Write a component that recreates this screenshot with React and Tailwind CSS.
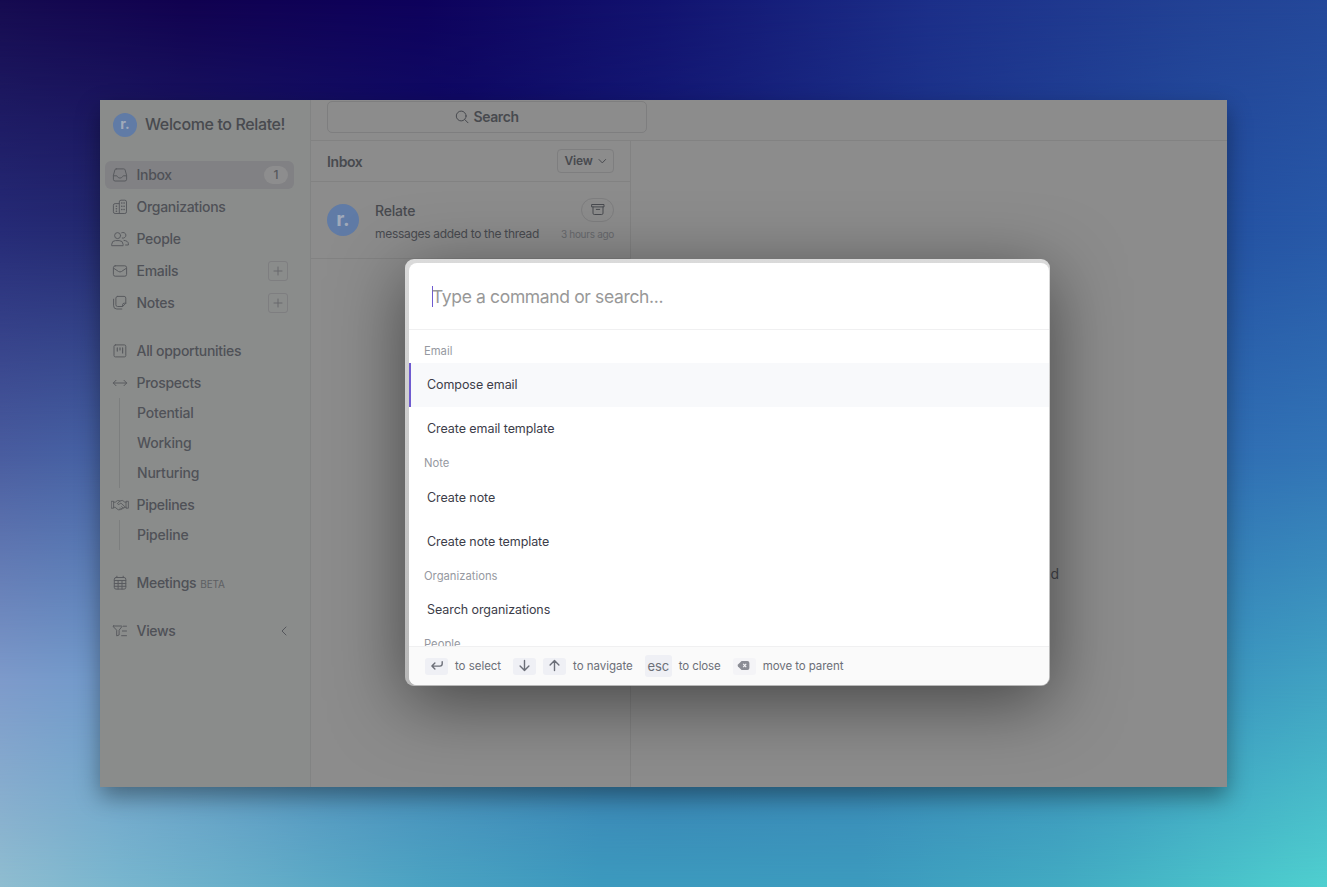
import React from "react";

const S = ({ children, className = "w-4 h-4", box = "0 0 16 16", sw = 1 }) => (
  <svg className={`${className} shrink-0`} viewBox={box} fill="none" stroke="currentColor" strokeWidth={sw} strokeLinecap="round" strokeLinejoin="round">{children}</svg>
);

const InboxIcon = () => (
  <S><path d="M4.2 1.9h7.6q1 0 1.3 1l1.5 5.4v4q0 1.7-1.7 1.7H3.1q-1.7 0-1.7-1.7v-4l1.5-5.4q.3-1 1.3-1z" /><path d="M1.4 8.8h3.2q.5 0 .8.7.7 1.6 2.6 1.6t2.6-1.6q.3-.7.8-.7h3.2" /></S>
);
const OrgIcon = () => (
  <S><path d="M6.5 14.5h6.3q1.7 0 1.7-1.7V2.9q0-1.7-1.7-1.7H9q-1.7 0-1.7 1.7v11.6H3.1q-1.7 0-1.7-1.7V6.3q0-1.7 1.7-1.7h4" /><path strokeWidth="1.5" d="M9.7 4h.2M12 4h.2M9.7 7.3h.2M12 7.3h.2M9.7 10.6h.2M12 10.6h.2M4.3 7.3h.2M4.3 9.8h.2M4.3 12.2h.2" /></S>
);
const PeopleIcon = () => (
  <S className="w-[18px] h-4" box="0 0 18 16"><circle cx="6.6" cy="4.6" r="3" /><path d="M.7 14.3v-1Q.9 9.6 4.4 9.6h3.8q3.7 0 3.9 3.7v1zM10.7 1.7a2.9 2.9 0 1 1 .6 5.4M13 9.4q4.2.3 4.4 3.4v1.2h-2.8" /></S>
);
const MailIcon = () => (
  <S><rect x="1.4" y="2.8" width="13.2" height="10.4" rx="1.8" /><path d="M1.6 5.2l4.9 3.3q1.5.9 3 0l4.9-3.3" /></S>
);
const NotesIcon = () => (
  <S><path d="M5.6 1.4h6.5q1.7 0 1.7 1.7v5.2l-3.2 3.2h-5q-1.7 0-1.7-1.7V3.1q0-1.7 1.7-1.7zM13.8 8.2h-1.6q-1.6 0-1.6 1.6v1.6M1.6 4.2v6.6q0 3.2 3.2 3.2h5" /></S>
);
const BoardIcon = () => (
  <S><rect x="2" y="1.9" width="11.8" height="12" rx="1.4" /><path strokeWidth="1.2" d="M5.3 4.9v3.2M8 4.9v2M10.6 4.9v5" /></S>
);
const ArrowsIcon = () => (
  <S><path d="M1.3 8h13.4M4 5.3L1.3 8 4 10.7M12 5.3L14.7 8 12 10.7" /></S>
);
const HandshakeIcon = () => (
  <S className="w-[18px] h-4" box="0 0 18 16" sw={0.9}><path d="M.6 4.3h2v6.9h-2zM15.4 4.3h2v6.9h-2zM2.8 5.2h1.5l2.1-1.6h1.7l1 .6M2.8 10.3h1.3l3 2.4q1 .6 1.8-.1M15.2 5.2h-1.4l-2-1.6H9.7L6.7 6q-.6.9.3 1.4.9.3 1.7-.5l1.2-.8 3.7 3.3q.5.8-.3 1.4-.6.3-1.2-.1M15.2 10.3h-1.5M12.1 10.8q0 1.5-1.6 1.2M10.5 12q-.6 1.2-2 .3M10.7 9.7l1.5 1.3M9.4 10.9l1.1 1.1" /></S>
);
const CalendarIcon = () => (
  <S><rect x="2.3" y="2.5" width="11.5" height="11.6" rx="1.7" /><path d="M4.9 1.2v1.3M11.2 1.2v1.3M2.3 5.5h11.5M2.3 8.5h11.5M2.3 11.3h11.5M6.1 5.5v8.6M10 5.5v8.6" /></S>
);
const FilterIcon = () => (
  <S><path d="M1.4 3h8.4q.3.4-.1.9L7.1 7.2V12l-2.4.9V7.2L1.5 3.9Q1 3.3 1.4 3zM11.3 3.2h3.2M10.4 8h4.1M9.6 12.7h4.9" /></S>
);
const Plus = () => (
  <span className="w-5 h-5 rounded-[3px] border border-[#7e7e80] flex items-center justify-center text-[#68696c]">
    <S className="w-3 h-3" box="0 0 12 12"><path d="M6 2v8M2 6h8" /></S>
  </span>
);

const Item = ({ icon, label, active, children }) => (
  <div className={`h-7 ml-[5px] mr-4 pl-[5px] pr-1.5 flex items-center rounded-md ${active ? "bg-[#818184]" : ""}`}>
    <span className="w-5 flex justify-center text-[#595b5f]">{icon}</span>
    <span className="ml-[6.5px] text-[14px] leading-5 font-medium tracking-[-0.3px] text-[#4f5157]">{label}</span>
    {children}
  </div>
);
const Sub = ({ items }) => (
  <div className="ml-[19px] border-l border-[#7c7e7e] pl-[17px] text-[14px] font-medium tracking-[-0.2px] text-[#505258]">
    {items.map((t) => <div key={t} className="h-[30px] leading-[30px]">{t}</div>)}
  </div>
);

const Sidebar = () => (
  <aside className="w-[211px] shrink-0 border-r border-[#828383] bg-[#8a8c8b] flex flex-col">
    <div className="flex items-center h-12 pl-[13px] pt-px">
      <span className="w-6 h-6 rounded-full bg-[#607ba6] text-[#a0aaba] text-[14px] font-bold leading-none pb-[2px] flex items-center justify-center">r.</span>
      <span className="ml-2 pb-0.5 text-[16px] font-medium text-[#484a4f] tracking-[-0.38px]">Welcome to Relate!</span>
    </div>
    <nav className="mt-[13px] flex flex-col">
      <div className="flex flex-col gap-1">
        <Item icon={<InboxIcon />} label="Inbox" active>
          <span className="ml-auto w-6 h-[18px] rounded-full bg-[#8d8d8e] flex items-center justify-center text-[12px] font-medium text-[#55575c]">1</span>
        </Item>
        <Item icon={<OrgIcon />} label="Organizations" />
        <Item icon={<PeopleIcon />} label="People" />
        <Item icon={<MailIcon />} label="Emails"><span className="ml-auto"><Plus /></span></Item>
        <Item icon={<NotesIcon />} label="Notes"><span className="ml-auto"><Plus /></span></Item>
      </div>
      <div className="mt-5 flex flex-col gap-1">
        <Item icon={<BoardIcon />} label="All opportunities" />
        <Item icon={<ArrowsIcon />} label="Prospects" />
      </div>
      <div className="mt-px"><Sub items={["Potential", "Working", "Nurturing"]} /></div>
      <div className="mt-[3px]"><Item icon={<HandshakeIcon />} label="Pipelines" /></div>
      <div className="mt-px"><Sub items={["Pipeline"]} /></div>
      <div className="mt-[19px]">
        <Item icon={<CalendarIcon />} label="Meetings"><span className="ml-1 mt-0.5 text-[10px] tracking-[-0.1px] text-[#5d5f63]">BETA</span></Item>
      </div>
      <div className="mt-5">
        <Item icon={<FilterIcon />} label="Views">
          <span className="ml-auto text-[#55575c]"><S className="w-2 h-3" box="0 0 8 12"><path d="M6 2L2 6l4 4" /></S></span>
        </Item>
      </div>
    </nav>
  </aside>
);

const Thread = () => (
  <section className="w-80 shrink-0 border-r border-[#828282] text-[#484a4f]">
    <div className="h-[41px] px-4 flex items-center justify-between border-b border-[#828282]">
      <h2 className="text-[14px] font-semibold tracking-[-0.4px]">Inbox</h2>
      <button className="w-[57px] h-6 border border-[#7e7e7f] rounded flex items-center justify-center gap-1 text-[12px] font-semibold tracking-[-0.2px]">
        View<S className="w-2.5 h-2.5" box="0 0 10 10"><path d="M2 3.5L5.3 6.9 8.6 3.5" /></S>
      </button>
    </div>
    <div className="h-[77px] px-4 flex border-b border-[#828282]">
      <span className="mt-[22px] w-8 h-8 rounded-full bg-[#607ba6] text-[#a0aaba] text-[20px] font-bold leading-none pb-[3px] flex items-center justify-center">r.</span>
      <div className="ml-4 flex-1 pt-4">
        <div className="flex justify-between items-center h-6">
          <span className="text-[14px] font-medium tracking-[-0.2px]">Relate</span>
          <span className="w-[33px] h-6 rounded-full border border-[#7e7e7f] flex items-center justify-center">
            <S className="w-3.5 h-3.5" box="0 0 14 14"><path d="M1 1.5h12v2.4H1zM2 3.9v6.3q0 1.3 1.3 1.3h7.4q1.3 0 1.3-1.3V3.9M5.3 6.4h3.4" /></S>
          </span>
        </div>
        <div className="flex justify-between items-center h-6">
          <span className="text-[12px] tracking-[-0.3px]">messages added to the thread</span>
          <span className="text-[10px] tracking-[-0.3px] text-[#67696d]">3 hours ago</span>
        </div>
      </div>
    </div>
  </section>
);

const Group = ({ children }) => <div className="h-[24.5px] shrink-0 pl-[15px] leading-[24.5px] text-[11.25px] text-[#9699a1]">{children}</div>;
const Command = ({ children, selected }) => (
  <div className={`h-11 shrink-0 flex items-center text-[12.5px] tracking-[-0.07px] text-[#3c3d49] border-l-2 pl-4 pt-px ${selected ? "bg-[#f8f9fb] border-[#6f5bd0]" : "border-transparent"}`}>{children}</div>
);
const Key = ({ children, className = "w-[23px] h-[17px] bg-[#eff0f5]" }) => (
  <kbd className={`rounded-[3px] flex items-center justify-center text-[#6c6f78] font-[Inter,sans-serif] ${className}`}>{children}</kbd>
);

const Palette = () => (
  <div className="absolute left-[305px] top-[159px] w-[645px] h-[427px] rounded-[9px] bg-linear-to-b from-[#dadada] to-[#b8b8b8] pt-1 pl-1 pr-px pb-px shadow-[0_16px_70px_rgba(0,0,0,0.5)]">
    <div className="w-full h-full rounded-lg bg-white overflow-hidden flex flex-col">
      <div className="h-[67px] shrink-0 border-b border-[#f0f0f1] pl-[23px] flex items-center">
        <span className="w-px h-[21px] bg-[#6f5bd0]" />
        <span className="pt-0.5 -ml-px text-[17.5px] tracking-[-0.36px] text-[#989898]">Type a command or search...</span>
      </div>
      <div className="flex-1 min-h-0 overflow-hidden flex flex-col pt-[8.5px]">
        <Group>Email</Group>
        <Command selected>Compose email</Command>
        <Command>Create email template</Command>
        <Group>Note</Group>
        <Command>Create note</Command>
        <Command>Create note template</Command>
        <Group>Organizations</Group>
        <Command>Search organizations</Command>
        <Group>People</Group>
      </div>
      <footer className="h-[39px] shrink-0 border-t border-[#f0f0f1] bg-[#fafafa] pl-4 flex items-center text-[11.5px] tracking-[-0.03px] text-[#6c6f78]">
        <Key><S className="w-3.5 h-3.5" box="0 0 14 14" sw={1.4}><path d="M12.2 2.7v2.1q0 2.3-2.3 2.3H2.2M4.9 4.1l-3 3 3 3" /></S></Key>
        <span className="ml-[7px] pt-px">to select</span>
        <Key className="ml-3 w-[23px] h-[17px] bg-[#eff0f5]"><S className="w-3.5 h-3.5" box="0 0 14 14" sw={1.4}><path d="M6.5 1.5v10M2.1 7.1l4.4 4.4 4.4-4.4" /></S></Key>
        <Key className="ml-[7px] w-[23px] h-[17px] bg-[#eff0f5]"><S className="w-3.5 h-3.5" box="0 0 14 14" sw={1.4}><path d="M6.5 11.5v-10M2.1 5.9l4.4-4.4 4.4 4.4" /></S></Key>
        <span className="ml-[7px] pt-px">to navigate</span>
        <Key className="ml-3 w-[27px] h-[22px] bg-[#eff0f5] text-[13px] pt-px">esc</Key>
        <span className="ml-[7px] pt-px tracking-[-0.12px]">to close</span>
        <Key className="ml-3 w-[23px] h-[17px] bg-[#f4f4f7]">
          <svg className="w-3.5 h-3" viewBox="0 0 14 12"><path d="M4.6 1h5.8q2 0 2 2v5q0 2-2 2H4.6L1 6.4q-.7-.9 0-1.8z" fill="#8b8d95" /><path d="M6.2 3.9l3 3.2M9.2 3.9l-3 3.2" stroke="#f4f4f7" strokeWidth="1.2" /></svg>
        </Key>
        <span className="ml-[7px] pt-px tracking-[-0.07px]">move to parent</span>
      </footer>
    </div>
  </div>
);

const Backdrop = ({ children }) => (
  <div className="w-[1327px] h-[887px] grid font-[Inter,sans-serif] bg-[linear-gradient(90deg,#160b50_0%,#110250_14%,#0e025c_32%,#121370_50%,#1c2f89_70%,#224194_90%,#24489a_100%)] overflow-hidden">
    <div className="col-start-1 row-start-1 bg-[linear-gradient(90deg,#262b77_0%,#232970_8%,#10106d_35%,#17237d_55%,#2350a1_90%,#2859a8_100%)] [mask-image:linear-gradient(to_bottom,transparent_0%,black_26%)]" />
    <div className="col-start-1 row-start-1 bg-[linear-gradient(90deg,#495c9f_0%,#4562a4_8%,#2b4f98_50%,#2f6cb2_90%,#3274b6_100%)] [mask-image:linear-gradient(to_bottom,transparent_26%,black_51%)]" />
    <div className="col-start-1 row-start-1 bg-[linear-gradient(90deg,#7e9bcb_0%,#719bcb_8%,#5085bb_25%,#3872ac_50%,#3b8abb_85%,#3d9ac0_94%,#41a3c3_100%)] [mask-image:linear-gradient(to_bottom,transparent_51%,black_77%)]" />
    <div className="col-start-1 row-start-1 bg-[linear-gradient(90deg,#8fbdd0_0%,#78b6ce_9%,#68afc9_18%,#4ba3c2_32%,#3c9abe_45%,#3c9bbe_65%,#42abc2_80%,#4dcbcd_97%,#4fcfcf_100%)] [mask-image:linear-gradient(to_bottom,transparent_77%,black_100%)]" />
    <div className="col-start-1 row-start-1 p-[100px]">{children}</div>
  </div>
);

export default function App() {
  return (
    <Backdrop>
      <div className="relative w-[1127px] h-[687px] flex bg-[#8c8c8c] shadow-[0_10px_22px_rgba(0,0,0,0.38)]">
        <Sidebar />
        <main className="flex-1 min-w-0 flex flex-col">
          <header className="h-[41px] shrink-0 border-b border-[#828282] px-4 pt-px">
            <div className="w-80 h-8 rounded-[5px] border border-[#7e7e7f] flex items-center justify-center gap-1 pb-px text-[14px] font-semibold tracking-[-0.4px] text-[#484a4f]">
              <S className="w-3.5 h-3.5" box="0 0 14 14"><circle cx="6.2" cy="6" r="4.9" /><path d="M9.8 9.6l3.2 3.2" /></S>Search
            </div>
          </header>
          <div className="flex-1 flex">
            <Thread />
            <section className="flex-1 flex justify-center pt-[423px] text-[14px] text-[#45474c]">
              <p className="w-[260px] text-right h-5 leading-5">No thread selected</p>
            </section>
          </div>
        </main>
        <Palette />
      </div>
    </Backdrop>
  );
}
